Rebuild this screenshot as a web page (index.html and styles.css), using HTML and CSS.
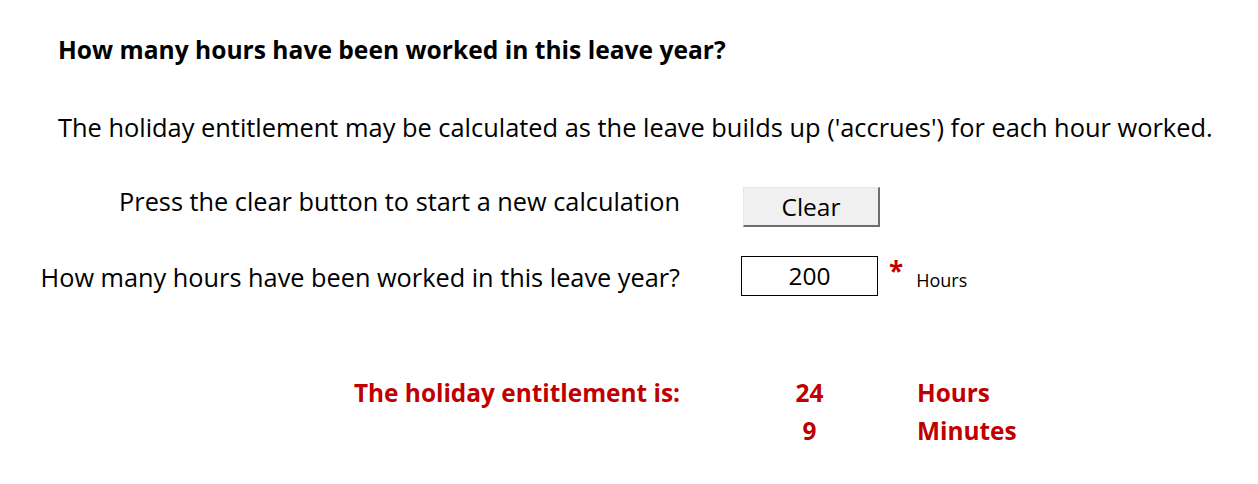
FILE: index.html
```html
<!DOCTYPE html>
<html>
<head>
<meta charset="utf-8">
<link rel="stylesheet" href="styles.css">
</head>
<body>
<div class="page">
  <h1 class="title">How many hours have been worked in this leave year?</h1>
  <p class="intro">The holiday entitlement may be calculated as the leave builds up ('accrues') for each hour worked.</p>
  <div class="form">
    <div class="label row-clear">Press the clear button to start a new calculation</div>
    <div class="cell row-clear"><button class="btn">Clear</button></div>
    <div class="unit row-clear"></div>

    <div class="label row-hours">How many hours have been worked in this leave year?</div>
    <div class="cell row-hours"><div class="input">200</div></div>
    <div class="unit row-hours"><span class="star">*</span><span class="small">Hours</span></div>

    <div class="label result row-res">The holiday entitlement is:</div>
    <div class="cell result row-res">24</div>
    <div class="unit result row-res">Hours</div>

    <div class="label result row-min"></div>
    <div class="cell result row-min">9</div>
    <div class="unit result row-min">Minutes</div>
  </div>
</div>
</body>
</html>
```
FILE: styles.css
```css
html, body {
  margin: 0;
  padding: 0;
  background: #ffffff;
}
body {
  font-family: "Open Sans", Lato, sans-serif;
  color: #000000;
}
.page {
  padding: 35px 0 0 0;
}
.title {
  margin: 0 0 0 58px;
  font-size: 24.6px;
  font-weight: 700;
  line-height: 30px;
}
.intro {
  margin: 47px 0 0 58px;
  font-size: 25.4px;
  line-height: 30px;
}
.form {
  display: grid;
  grid-template-columns: 680px 61px 137px 1fr;
  margin-top: 44px;
  font-size: 25.3px;
}
.label {
  grid-column: 1;
  text-align: right;
}
.cell {
  grid-column: 3;
  text-align: center;
}
.unit {
  grid-column: 4;
  display: flex;
  align-items: baseline;
}
.row-clear { height: 70px; line-height: 30px; }
.row-hours { height: 116px; }
.row-res { height: 38px; line-height: 30px; }
.row-min { height: 38px; line-height: 30px; }
.btn {
  display: block;
  box-sizing: border-box;
  width: 137px;
  height: 40px;
  margin: 1px 0 0 2px;
  padding: 0 0 1px 0;
  background: #f0f0f0;
  border: 1px solid #e6e6e6;
  border-right: 2px solid #6e6e6e;
  border-bottom: 2px solid #6e6e6e;
  font-family: inherit;
  font-size: 24.5px;
  color: #000;
}
.row-hours.label { line-height: 30px; padding-top: 6px; }
.input {
  box-sizing: border-box;
  width: 137px;
  height: 40px;
  border: 1px solid #000;
  line-height: 38px;
  font-size: 24.5px;
  text-align: center;
}
.row-hours.unit { padding-left: 11px; padding-top: 3px; }
.star {
  color: #c00000;
  font-size: 26px;
  font-weight: 700;
  margin-right: 13px;
  position: relative;
  top: -6px;
}
.small {
  font-size: 18px;
}
.result {
  color: #c00000;
  font-weight: 700;
  font-size: 24.4px;
}
.row-res.unit, .row-min.unit { padding-left: 39px; }
```
